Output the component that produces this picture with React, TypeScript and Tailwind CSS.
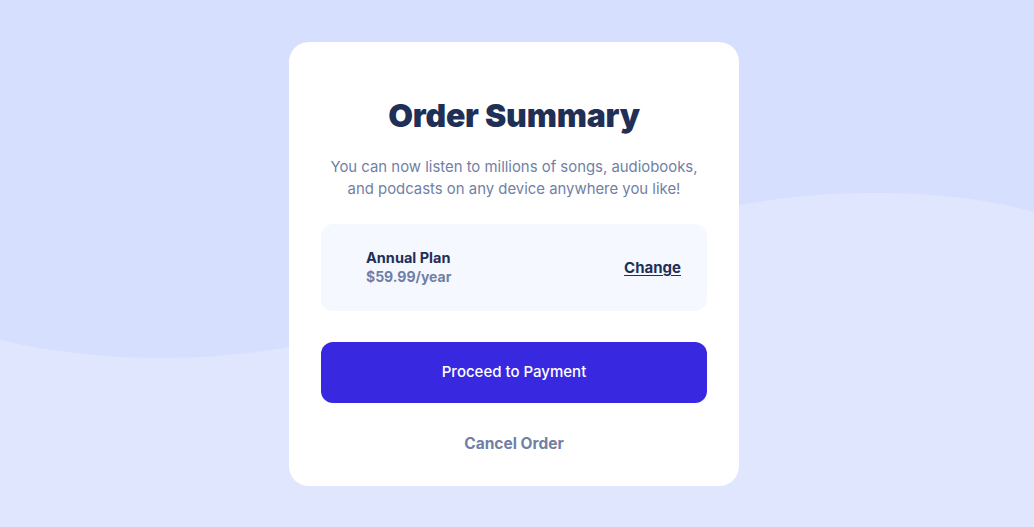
import React from 'react';

const plan = { name: 'Annual Plan', price: '$59.99/year' };

const Waves: React.FC = () => (
  <svg
    className="absolute inset-0 h-full w-full"
    viewBox="0 0 1034 527"
    preserveAspectRatio="none"
    aria-hidden="true"
  >
    <rect width="1034" height="527" fill="#dfe6fe" />
    <path
      d="M0 0 H1034 V212 C990 200 940 193 877 193 C830 193 790 196 739 205 C600 230 450 310 289 347 C260 352 220 358 160 358 C110 358 50 352 0 340 Z"
      fill="#d6e0fe"
    />
  </svg>
);

const App: React.FC = () => {
  return (
    <div
      className="relative flex min-h-screen items-center justify-center overflow-hidden pr-[6px]"
      style={{ fontFamily: 'Inter, "Open Sans", sans-serif' }}
    >
      <Waves />
      <div className="relative flex w-[450px] flex-col items-center rounded-[20px] bg-white px-8 pt-[56px] pb-[30px]">
        <h1 className="text-[32px] leading-9 font-black tracking-[-0.2px] text-[#1f2f56]">
          Order Summary
        </h1>
        <p className="mt-[22px] text-center text-[14.9px] leading-[22px] text-[#717fa6]">
          You can now listen to millions of songs, audiobooks,
          <br />
          and podcasts on any device anywhere you like!
        </p>

        <div className="mt-6 flex h-[87px] w-full items-center justify-between rounded-xl bg-[#f5f8ff] pr-[26px] pl-[45px]">
          <div className="flex flex-col">
            <span className="text-[14.5px] leading-[19px] font-bold text-[#1f2f56]">{plan.name}</span>
            <span className="text-[14px] leading-[19px] font-bold text-[#717fa6]">{plan.price}</span>
          </div>
          <a href="#" className="mt-[3px] text-[15px] font-bold text-[#1f2f56] underline underline-offset-2">
            Change
          </a>
        </div>

        <button className="mt-[31px] h-[61px] w-full rounded-xl bg-[#3829e0] text-[15px] font-medium text-white">
          Proceed to Payment
        </button>

        <button className="mt-[29px] text-[15.5px] leading-6 font-bold text-[#717fa6]">
          Cancel Order
        </button>
      </div>
    </div>
  );
};

export default App;
